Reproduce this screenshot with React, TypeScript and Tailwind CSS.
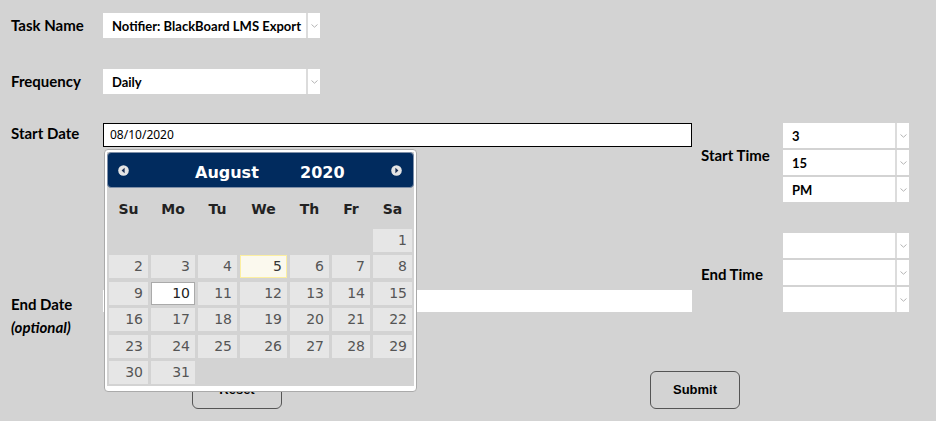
import React from "react";

function Chevron() {
  return (
    <svg width="7" height="4" viewBox="0 0 7 4">
      <path d="M0.5 0.5 L3.5 3.2 L6.5 0.5" stroke="#b4b4b4" strokeWidth="1" fill="none" />
    </svg>
  );
}

function Select({ className, value }: { className: string; value: string }) {
  return (
    <div className={`flex h-[25px] bg-white ${className}`}>
      <div className="flex-1 flex items-center pl-[9px] pt-[2px] text-[13px] font-bold text-black whitespace-nowrap overflow-hidden">
        {value}
      </div>
      <div className="w-[14px] border-l-2 border-[#dcdcdc] flex items-center justify-center">
        <Chevron />
      </div>
    </div>
  );
}

function NavIcon({ dir }: { dir: "prev" | "next" }) {
  return (
    <svg width="11" height="11" viewBox="0 0 11 11">
      <circle cx="5.5" cy="5.5" r="5.3" fill="#e4e4e4" />
      {dir === "prev" ? (
        <polygon points="6.6,2.8 6.6,8.2 3.6,5.5" fill="#1a2f55" />
      ) : (
        <polygon points="4.4,2.8 4.4,8.2 7.4,5.5" fill="#1a2f55" />
      )}
    </svg>
  );
}

const rows: (number | null)[][] = [
  [null, null, null, null, null, null, 1],
  [2, 3, 4, 5, 6, 7, 8],
  [9, 10, 11, 12, 13, 14, 15],
  [16, 17, 18, 19, 20, 21, 22],
  [23, 24, 25, 26, 27, 28, 29],
  [30, 31, null, null, null, null, null],
];

const dayNames = ["Su", "Mo", "Tu", "We", "Th", "Fr", "Sa"];

function Datepicker() {
  return (
    <div className="absolute left-[1px] top-[26px] z-10 w-[313px] bg-white border border-[#aaaaaa] rounded-[4px] px-[2px] pt-[2px] pb-[5px]">
      <div className="bg-[#d3d3d3] pb-[2px]">
        <div className="h-[36px] bg-[#012b5e] rounded-[4px] border border-[#8090a8] flex items-center text-white font-['DejaVu_Sans',sans-serif] font-bold text-[16px]">
          <div className="ml-[10px] flex">
            <NavIcon dir="prev" />
          </div>
          <span className="ml-[66px] mt-[6px] w-[105px]">August</span>
          <span className="mt-[6px]">2020</span>
          <div className="ml-auto mr-[11px] flex">
            <NavIcon dir="next" />
          </div>
        </div>
        <div className="px-[2px] font-['DejaVu_Sans',sans-serif]">
          <div className="mt-[9px] h-[24px] grid grid-cols-[39px_44px_39px_47px_39px_38px_39px] gap-x-[3px] items-center text-[14px] font-bold text-[#222222]">
            {dayNames.map((d) => (
              <div key={d} className="text-center">
                {d}
              </div>
            ))}
          </div>
          <div className="mt-[8px] grid grid-cols-[39px_44px_39px_47px_39px_38px_39px] gap-x-[3px] gap-y-[3.4px]">
            {rows.flat().map((n, i) => {
              if (n === null) return <div key={i} className="h-[23px]" />;
              let cls = "bg-[#e6e6e6] border-[#e6e6e6] text-[#555555]";
              if (n === 5) cls = "bg-[#fbf9ee] border-[#fcefa1] text-[#363636]";
              if (n === 10) cls = "bg-white border-[#aaaaaa] text-[#212121]";
              return (
                <div
                  key={i}
                  className={`h-[23px] border text-right pr-[4px] text-[14px] leading-[21px] ${cls}`}
                >
                  {n}
                </div>
              );
            })}
          </div>
        </div>
      </div>
    </div>
  );
}

export default function App() {
  return (
    <div className="w-[936px] h-[421px] bg-[#d3d3d3] overflow-hidden font-['Lato',sans-serif] text-black">
      <div className="pt-[13px] pl-[11px]">
        <div className="flex items-center h-[25px]">
          <div className="w-[92px] text-[15px] font-bold">Task Name</div>
          <Select className="w-[217px]" value="Notifier: BlackBoard LMS Export" />
        </div>
        <div className="flex items-center h-[25px] mt-[31px]">
          <div className="w-[92px] text-[15px] font-bold">Frequency</div>
          <Select className="w-[217px]" value="Daily" />
        </div>
        <div className="flex mt-[29px]">
          <div className="w-[681px]">
            <div className="flex">
              <div className="w-[92px] text-[15px] font-bold leading-[20px]">Start Date</div>
              <div className="relative">
                <div className="w-[589px] h-[24px] border border-black bg-white flex items-center pl-[6px] text-[12px] font-['Noto_Sans',sans-serif]">
                  08/10/2020
                </div>
                <Datepicker />
              </div>
            </div>
            <div className="flex items-start h-[22px] mt-[143px]">
              <div className="w-[92px] pt-[3px] text-[15px] font-bold leading-[23px]">
                <div>End Date</div>
                <div className="italic">(optional)</div>
              </div>
              <div className="w-[589px] h-[22px] bg-white" />
            </div>
          </div>
          <div className="ml-[9px]">
            <div className="flex">
              <div className="w-[82px] pt-[22px] text-[15px] font-bold leading-[20px]">Start Time</div>
              <div className="flex flex-col gap-[2px]">
                <Select className="w-[126px]" value="3" />
                <Select className="w-[126px]" value="15" />
                <Select className="w-[126px]" value="PM" />
              </div>
            </div>
            <div className="flex mt-[31px]">
              <div className="w-[82px] pt-[31px] text-[15px] font-bold leading-[20px]">End Time</div>
              <div className="flex flex-col gap-[2px]">
                <Select className="w-[126px]" value="" />
                <Select className="w-[126px]" value="" />
                <Select className="w-[126px]" value="" />
              </div>
            </div>
          </div>
        </div>
        <div className="flex mt-[59px] font-['Liberation_Sans',sans-serif]">
          <button className="ml-[181px] w-[90px] h-[38px] border border-[#555555] rounded-[6px] text-[13px] font-bold text-black bg-transparent">
            Reset
          </button>
          <button className="ml-[368px] w-[90px] h-[38px] border border-[#555555] rounded-[6px] text-[13px] font-bold text-black bg-transparent">
            Submit
          </button>
        </div>
      </div>
    </div>
  );
}
